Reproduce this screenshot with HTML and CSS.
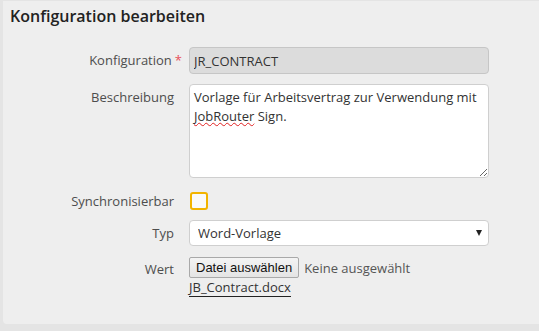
FILE: index.html
```html
<!DOCTYPE html>
<html>
<head>
    <title>Konfiguration bearbeiten</title>
    <link rel="stylesheet" href="styles.css">
</head>
<body>
    <div class="panel">
        <h2>Konfiguration bearbeiten</h2>
        <div class="form">
            <label class="field-label">Konfiguration<span class="req">*</span></label>
            <input class="text-input" type="text" value="JR_CONTRACT" disabled>

            <label class="field-label">Beschreibung</label>
            <div class="textarea">Vorlage für Arbeitsvertrag zur Verwendung mit <span class="misspelled">JobRouter</span> Sign.</div>

            <label class="field-label">Synchronisierbar</label>
            <div><input class="check" type="checkbox"></div>

            <label class="field-label">Typ</label>
            <div class="select-wrap">
                <select class="select">
                    <option>Word-Vorlage</option>
                </select>
            </div>

            <label class="field-label">Wert</label>
            <div class="file-field">
                <div class="file-row">
                    <button class="file-btn">Datei auswählen</button>
                    <span class="file-none">Keine ausgewählt</span>
                </div>
                <a class="file-link" href="#">JB_Contract.docx</a>
            </div>
        </div>
    </div>
</body>
</html>
```

FILE: styles.css
```css
body {
    margin: 0;
    background: #e4e4e4;
    font-family: "Open Sans", "Liberation Sans", sans-serif;
    font-size: 13px;
    color: #333;
}
.panel {
    margin: 1px 0 0 3px;
    padding-bottom: 27px;
    background: #eeeeee;
    border-radius: 0 0 0 4px;
}
h2 {
    margin: 0;
    padding: 4px 0 0 7px;
    font-size: 16px;
    font-weight: 600;
    line-height: 22px;
    color: #222;
}
.form {
    display: grid;
    grid-template-columns: 171px 300px;
    column-gap: 15px;
    row-gap: 10px;
    margin-top: 20px;
}
.field-label {
    text-align: right;
    line-height: 18px;
    padding-top: 4px;
    color: #4d4d4d;
}
.req {
    color: #e8505b;
    margin-left: 3px;
    margin-right: -8px;
}
.text-input {
    box-sizing: border-box;
    width: 300px;
    height: 27px;
    margin: 0;
    padding: 0 4px;
    border: 1px solid #c6c6c6;
    border-radius: 4px;
    background: #dcdcdc;
    font-family: inherit;
    font-size: 13px;
    color: #333;
}
.textarea {
    box-sizing: border-box;
    width: 300px;
    height: 94px;
    padding: 3px 4px;
    border: 1px solid #cfcfcf;
    border-radius: 4px;
    background: #fff;
    line-height: 18.5px;
    resize: both;
    overflow: auto;
}
.misspelled {
    text-decoration: underline wavy #e02020;
    text-decoration-thickness: 1px;
    text-decoration-skip-ink: none;
    text-underline-offset: 1px;
}
.check {
    appearance: none;
    display: block;
    box-sizing: border-box;
    width: 18px;
    height: 18px;
    margin: 4px 0 0 1px;
    border: 2px solid #f2b400;
    border-radius: 3px;
    background: #fafafa;
}
.select-wrap {
    position: relative;
}
.select-wrap::after {
    content: "";
    position: absolute;
    right: 7px;
    top: 10px;
    border-left: 3px solid transparent;
    border-right: 3px solid transparent;
    border-top: 6px solid #222;
}
.select {
    appearance: none;
    box-sizing: border-box;
    display: block;
    width: 300px;
    height: 26px;
    margin: 0;
    padding: 0 8px;
    border: 1px solid #cfcfcf;
    border-radius: 4px;
    background: #fff;
    font-family: inherit;
    font-size: 13px;
    color: #333;
}
.file-field {
    padding-top: 1px;
}
.file-row {
    display: flex;
    align-items: center;
    gap: 5px;
}
.file-btn {
    box-sizing: border-box;
    height: 21px;
    margin: 0;
    padding: 0 6px;
    border: 1px solid #a9a9a9;
    border-radius: 2px;
    background: linear-gradient(#f4f4f4, #e4e4e4);
    font-family: "Liberation Sans", Arial, sans-serif;
    font-size: 13px;
    color: #111;
}
.file-none {
    color: #555;
}
.file-link {
    display: inline-block;
    line-height: 17px;
    color: #333;
    text-decoration: none;
    border-bottom: 1px solid #222;
}
```
